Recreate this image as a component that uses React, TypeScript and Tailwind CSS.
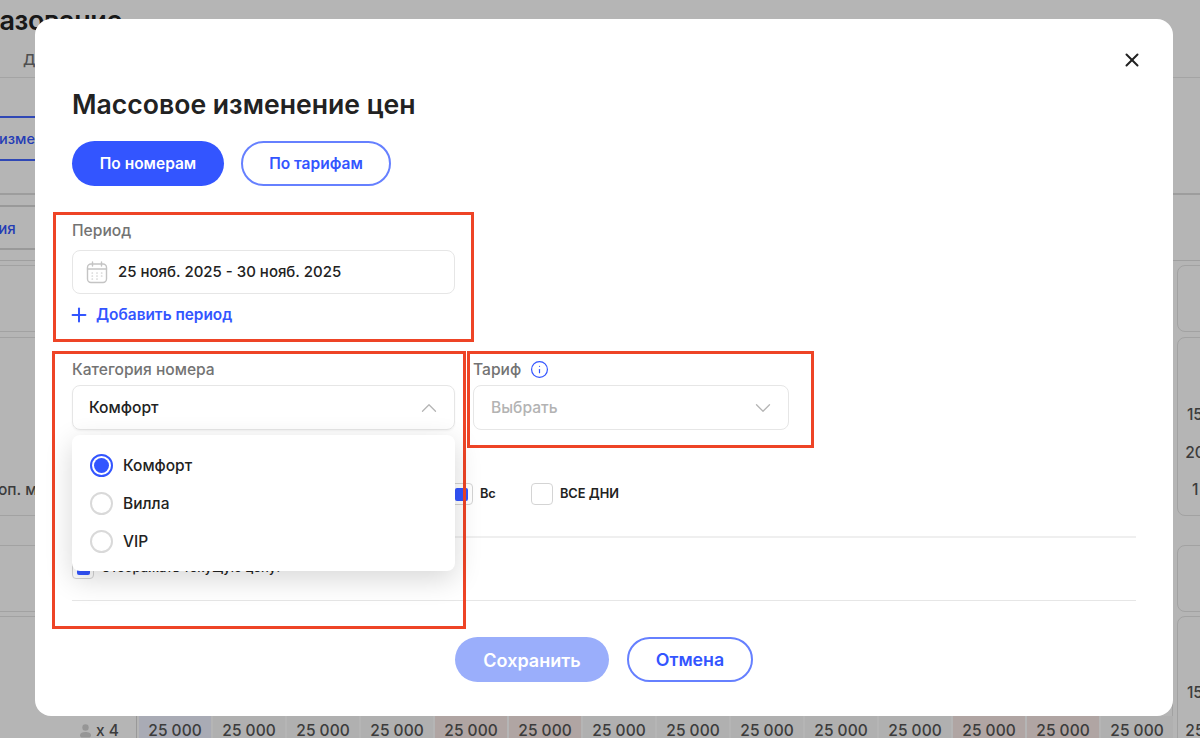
import { ChevronDown, ChevronUp, Info, Plus, X } from "lucide-react";

const days = ["Пн", "Вт", "Ср", "Чт", "Пт", "Сб"];
const prices = ["blue", "", "", "", "pink", "pink", "", "", "", "", "", "pink", "pink", ""];

function CalendarIcon() {
  return (
    <svg width="22" height="23" viewBox="0 0 22 23" fill="none" stroke="#c4c4c4" strokeWidth="1.4" strokeLinecap="round">
      <rect x="1.5" y="3" width="19" height="18.5" rx="3.5" />
      <path d="M1.5 8h19M6.5 1v4M15.5 1v4" />
      <path d="M6 12h.6M10.7 12h.6M15.4 12h.6M6 15h.6M10.7 15h.6M15.4 15h.6M6 18h.6M10.7 18h.6" strokeWidth="1.2" />
    </svg>
  );
}

function PersonIcon() {
  return (
    <svg width="11" height="14" viewBox="0 0 11 14" fill="#a3a3a3" className="shrink-0 [filter:brightness(1.3)]">
      <circle cx="5.5" cy="3.5" r="3.2" />
      <path d="M0 11.2C0 9 2.4 8 5.5 8s5.5 1 5.5 3.2c0 1.6-1 2.3-2.4 2.3H2.400C1 13.500 0 12.800 0 11.200Z" />
    </svg>
  );
}

function Radio({ label, checked }: { label: string; checked?: boolean }) {
  return (
    <div className="flex h-[38px] items-center gap-[10px]">
      <span
        className={`flex h-[23px] w-[23px] items-center justify-center rounded-full border-2 ${checked ? "border-[#3355ff]" : "border-[#d9d9d9]"}`}
      >
        {checked && <span className="h-[15px] w-[15px] rounded-full bg-[#3355ff]" />}
      </span>
      <span className="pt-px text-[15.5px] font-medium text-[#222]">{label}</span>
    </div>
  );
}

function DayBox({ label, checked }: { label: string; checked?: boolean }) {
  return (
    <div className="flex items-center gap-[7px]">
      <span className="flex h-[22px] w-[22px] shrink-0 items-center justify-center rounded-[4px] border border-[#d4d4d4]">
        {checked && <span className="h-[13px] w-[13px] rounded-[2px] bg-[#3355ff]" />}
      </span>
      <span className="text-[12.8px] font-semibold text-[#222]">{label}</span>
    </div>
  );
}

function Background() {
  return (
    <div className="flex h-[738px] flex-col text-[#222]">
      <div className="h-[78px] shrink-0 border-b border-[#e8e8e8]">
        <div className="flex w-[122px] justify-end pt-[3px]">
          <span className="whitespace-nowrap text-[27px] font-semibold leading-[36px] tracking-[-0.4px]">Ценообразование</span>
        </div>
        <p className="mt-[10px] pl-[23px] text-[15px] font-medium text-[#707070]">Даты</p>
      </div>
      <div className="h-[117px] shrink-0 border-b-2 border-[#dedede] pt-[38px]">
        <div className="flex h-[45px] w-[200px] items-center border-y-2 border-[#4466ff] text-[14.5px] font-medium text-[#3355ff]">
          <span className="-ml-[1px]">изменение</span>
        </div>
      </div>
      <div className="h-[66px] shrink-0 border-b border-[#e0e0e0] pt-[10px]">
        <div className="flex h-[45px] w-[200px] items-center border-y-2 border-[#d8d8d8] text-[15px] font-medium text-[#3355ff]">
          <span className="-ml-[68px] whitespace-nowrap pt-[3px]">Изменения</span>
        </div>
      </div>

      <div className="mt-[4px] flex h-[67px] shrink-0 gap-[4px]">
        <div className="-ml-[8px] w-[1181px] shrink-0 rounded-lg border border-[#e4e4e4]" />
        <div className="w-[70px] shrink-0 rounded-lg border border-[#e4e4e4]" />
      </div>
      <div className="mt-[5px] flex h-[179px] shrink-0 gap-[4px]">
        <div className="-ml-[8px] flex w-[1181px] shrink-0 flex-col justify-end rounded-lg border border-[#e4e4e4] pb-[15px]">
          <span className="-ml-[8px] text-[15.5px] font-medium leading-5 text-[#555]">Доп. места</span>
        </div>
        <div className="flex w-[70px] shrink-0 flex-col items-center justify-end rounded-lg border border-[#e4e4e4] pb-[15px] text-[15.5px] font-medium leading-5 text-[#555]">
          <span>15 000</span>
          <span className="mt-[18px]">20 000</span>
          <span className="mt-[17px]">1 500</span>
        </div>
      </div>
      <div className="mt-[29px] flex h-[67px] shrink-0 gap-[4px]">
        <div className="-ml-[8px] w-[1181px] shrink-0 rounded-lg border border-[#e4e4e4]" />
        <div className="w-[70px] shrink-0 rounded-lg border border-[#e4e4e4]" />
      </div>
      <div className="mt-[4px] flex h-[150px] shrink-0 gap-[4px]">
        <div className="-ml-[8px] w-[1181px] shrink-0 rounded-t-lg border border-[#e4e4e4] pt-[99px]">
          <div className="flex h-[40px] gap-[2px] text-[15.5px] font-medium text-[#555]">
            <div className="flex w-[144px] shrink-0 justify-end border-r border-[#d8d8d8] pr-[17px] pt-[5px]">
              <div className="flex items-center gap-[5px] self-start">
                <PersonIcon />
                <span className="leading-5">x 4</span>
              </div>
            </div>
            {prices.map((tone, i) => (
              <div
                key={i}
                className={`w-[72px] shrink-0 pt-[5px] text-center leading-5 ${tone === "blue" ? "bg-[#eef1ff]" : tone === "pink" ? "bg-[#f8e9e6]" : "bg-[#f8f8f8]"}`}
              >
                25 000
              </div>
            ))}
          </div>
        </div>
        <div className="flex w-[70px] shrink-0 flex-col items-center rounded-t-lg border border-[#e4e4e4] pt-[66px] text-[15.5px] font-medium leading-5 text-[#555]">
          <span>15 000</span>
          <span className="mt-[18px]">25 000</span>
        </div>
      </div>
    </div>
  );
}

export default function App() {
  return (
    <div className="relative h-[738px] w-[1200px] overflow-hidden bg-white font-[Inter,sans-serif]">
      <Background />
      <div className="absolute inset-0 bg-black/[0.29]" />

      <div className="absolute left-[35px] top-[19px] h-[697px] w-[1138px] rounded-2xl bg-white pl-[37px] pr-[37px] pt-[34px]">
        <div className="-mr-[7px] flex h-[14px] justify-end">
          <X size={22} strokeWidth={2.2} color="#222" className="-mt-[4px] shrink-0" />
        </div>
        <h1 className="mt-[21px] text-[26.6px] font-semibold leading-8 text-[#222]">Массовое изменение цен</h1>

        <div className="mt-[21px] flex gap-[17px]">
          <button className="h-[45px] w-[152px] rounded-full bg-[#3355ff] pt-px text-[15.5px] font-semibold text-white">По номерам</button>
          <button className="h-[45px] w-[150px] rounded-full border-2 border-[#6680ff] pt-px text-[15.5px] font-semibold text-[#3355ff]">
            По тарифам
          </button>
        </div>

        <p className="mt-[35px] text-[15.6px] font-medium leading-5 text-[#737373]">Период</p>
        <div className="mt-[9px] flex h-[44px] w-[383px] items-center gap-[10px] rounded-lg border border-[#e6e6e6] pl-[13px]">
          <CalendarIcon />
          <span className="text-[15px] font-medium text-[#222]">25 нояб. 2025 - 30 нояб. 2025</span>
        </div>
        <div className="mt-[11px] flex h-5 items-center gap-[6px] text-[15.4px] font-semibold text-[#3355ff]">
          <Plus size={22} strokeWidth={2.2} className="-ml-[4px] shrink-0" />
          <span>Добавить период</span>
        </div>

        <div className="mt-[35px] flex gap-[18px]">
          <div className="relative w-[383px]">
            <p className="text-[15.6px] font-medium leading-5 text-[#737373]">Категория номера</p>
            <div className="mt-[5px] flex h-[45px] items-center justify-between rounded-lg border border-[#e6e6e6] pl-[16px] pr-[12px] shadow-[0_1px_2px_rgba(0,0,0,0.05)]">
              <span className="pt-px text-[15.6px] font-medium text-[#222]">Комфорт</span>
              <ChevronUp size={26} strokeWidth={1.2} color="#b5b5b5" />
            </div>
            <div className="absolute left-0 top-[75px] z-10 h-[136px] w-[383px] rounded-lg bg-white pl-[18px] pt-[11px] shadow-[0_8px_28px_rgba(0,0,0,0.16)]">
              <Radio label="Комфорт" checked />
              <Radio label="Вилла" />
              <Radio label="VIP" />
            </div>
          </div>
          <div className="w-[316px]">
            <div className="flex h-5 items-center gap-[9px]">
              <span className="text-[15.6px] font-medium leading-5 text-[#737373]">Тариф</span>
              <Info size={19} strokeWidth={1.5} color="#3355ff" className="-mt-[2px]" />
            </div>
            <div className="mt-[5px] flex h-[45px] items-center justify-between rounded-lg border border-[#e6e6e6] pl-[17px] pr-[12px]">
              <span className="pt-px text-[15.6px] font-medium text-[#b3b3b3]">Выбрать</span>
              <ChevronDown size={26} strokeWidth={1.2} color="#b5b5b5" />
            </div>
          </div>
        </div>

        <div className="mt-[53px] flex">
          {days.map((d) => (
            <div key={d} className="w-[63.17px] shrink-0">
              <DayBox label={d} checked />
            </div>
          ))}
          <div className="w-[81px] shrink-0">
            <DayBox label="Вс" checked />
          </div>
          <div className="-ml-[1px]">
            <DayBox label="ВСЕ ДНИ" />
          </div>
        </div>

        <div className="mt-[31px] h-[2px] bg-[#efefef]" />
        <div className="mt-[19px]">
          <div className="flex items-center gap-[7px]">
            <span className="flex h-[22px] w-[22px] items-center justify-center rounded-[4px] border border-[#d4d4d4]">
              <span className="h-[13px] w-[13px] rounded-[2px] bg-[#3355ff]" />
            </span>
            <span className="text-[13px] font-medium text-[#222]">Отображать текущую цену:</span>
          </div>
        </div>
        <div className="mt-[21px] h-px bg-[#e6e6e6]" />

        <div className="mt-[36px] flex justify-center gap-[18px]">
          <button className="h-[45px] w-[154px] rounded-full bg-[#9aaefb] pt-[2px] text-[18px] font-semibold text-white">Сохранить</button>
          <button className="h-[45px] w-[126px] rounded-full border-2 border-[#6680ff] pt-[2px] text-[17.8px] font-semibold text-[#3355ff]">
            Отмена
          </button>
        </div>
      </div>

      {/* красные рамки поверх скриншота */}
      <div className="absolute left-[53px] top-[212px] h-[130px] w-[421px] border-[3px] border-[#ee4426]" />
      <div className="absolute left-[52px] top-[351px] h-[278px] w-[414px] border-[3px] border-[#ee4426]" />
      <div className="absolute left-[467px] top-[351px] h-[97px] w-[347px] border-[3px] border-[#ee4426]" />
    </div>
  );
}
